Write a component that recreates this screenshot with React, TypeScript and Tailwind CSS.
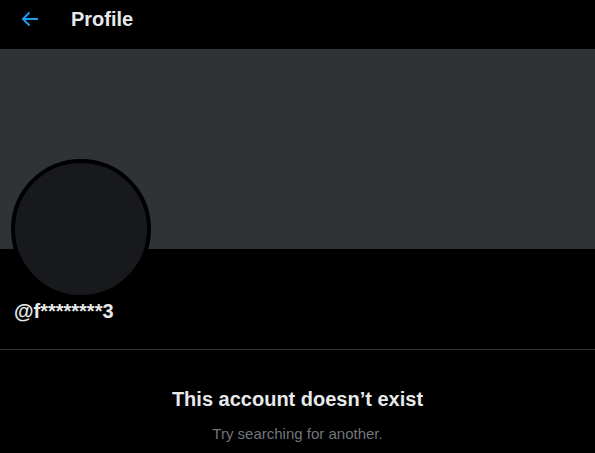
import React from "react";

function App() {
  return (
    <div className="w-[595px] h-[453px] bg-black text-[#e7e9ea] overflow-hidden font-['Liberation_Sans',Arial,sans-serif]">
      <header className="h-[49px] flex items-start pt-[7px]">
        <div className="w-[71px] pl-[20px] pt-[2px]">
          <svg viewBox="0 0 20 20" className="w-[20px] h-[20px]" fill="none" stroke="#1d9bf0" strokeWidth="2">
            <path d="M18 10H3M9.5 3.5L3 10l6.5 6.5" />
          </svg>
        </div>
        <h2 className="text-[20px] font-bold leading-6">Profile</h2>
      </header>
      <div className="h-[200px] bg-[#2f3336]" />
      <div className="px-[11px]">
        <div className="-mt-[90px] w-[140px] h-[140px] rounded-full border-4 border-black bg-[#17191d]" />
        <div className="pl-[3px] text-[20px] font-bold leading-6">@f********3</div>
      </div>
      <div className="mt-[26px] h-px bg-[#2f3336]" />
      <div className="flex flex-col items-center pt-[37px]">
        <h3 className="text-[20px] font-bold leading-6">This account doesn’t exist</h3>
        <p className="mt-[13px] text-[15px] text-[#71767b] leading-5">Try searching for another.</p>
      </div>
    </div>
  );
}

export default App;
